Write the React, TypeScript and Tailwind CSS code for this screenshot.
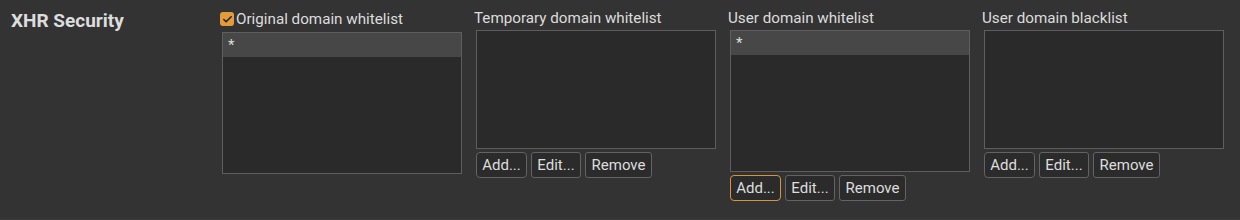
import { Check } from 'lucide-react';

type ListProps = {
  title: string;
  items: string[];
  tall?: boolean;
  checkbox?: boolean;
  buttons?: boolean;
  focusAdd?: boolean;
};

function DomainList({ title, items, tall, checkbox, buttons, focusAdd }: ListProps) {
  return (
    <div className="w-[254px] shrink-0 flex flex-col">
      {checkbox ? (
        <label className="flex items-center gap-[2px] h-[20px] mt-[9px] mb-[3px] ml-[-2px]">
          <span className="w-[14px] h-[14px] rounded-[3px] bg-[#e49b39] flex items-center justify-center">
            <Check className="w-[11px] h-[11px] text-[#222]" strokeWidth={3.5} />
          </span>
          <span className="text-[15.2px] text-[#dddddd]">{title}</span>
        </label>
      ) : (
        <div className="h-[20px] mt-[8px] mb-[2px] text-[15.2px] leading-[20px] text-[#dddddd] ml-[-2px]">{title}</div>
      )}
      <div
        className={`w-[240px] border border-[#5e5e5e] bg-[#2a2a2a] ${tall ? 'h-[142px]' : 'h-[119px]'}`}
      >
        {items.map((it) => (
          <div key={it} className="h-[24px] bg-[#474747] pl-[5px] text-[15px] leading-[24px] text-[#dddddd]">
            {it}
          </div>
        ))}
      </div>
      {buttons && (
        <div className="flex gap-[4px] mt-[3px]">
          <button
            className={`h-[26px] w-[51px] rounded-[4px] bg-[#2b2b2b] text-[15px] text-[#dddddd] ${
              focusAdd ? 'border-[1.5px] border-[#d8943a]' : 'border border-[#636363]'
            }`}
          >
            Add...
          </button>
          <button className="h-[26px] w-[50px] rounded-[3px] border border-[#636363] bg-[#2b2b2b] text-[15px] text-[#dddddd]">
            Edit...
          </button>
          <button className="h-[26px] w-[67px] rounded-[3px] border border-[#636363] bg-[#2b2b2b] text-[15px] text-[#dddddd]">
            Remove
          </button>
        </div>
      )}
    </div>
  );
}

export default function App() {
  return (
    <div
      className="w-[1240px] h-[220px] bg-[#333333] border-b border-[#3d3d3d] flex"
      style={{ fontFamily: 'Roboto, "Noto Sans", sans-serif' }}
    >
      <div className="w-[222px] shrink-0 pl-[11px] pt-[7px]">
        <h2 className="text-[19px] font-bold text-[#dddddd]">XHR Security</h2>
      </div>
      <DomainList title="Original domain whitelist" items={['*']} tall checkbox />
      <DomainList title="Temporary domain whitelist" items={[]} buttons />
      <DomainList title="User domain whitelist" items={['*']} tall buttons focusAdd />
      <DomainList title="User domain blacklist" items={[]} buttons />
    </div>
  );
}
